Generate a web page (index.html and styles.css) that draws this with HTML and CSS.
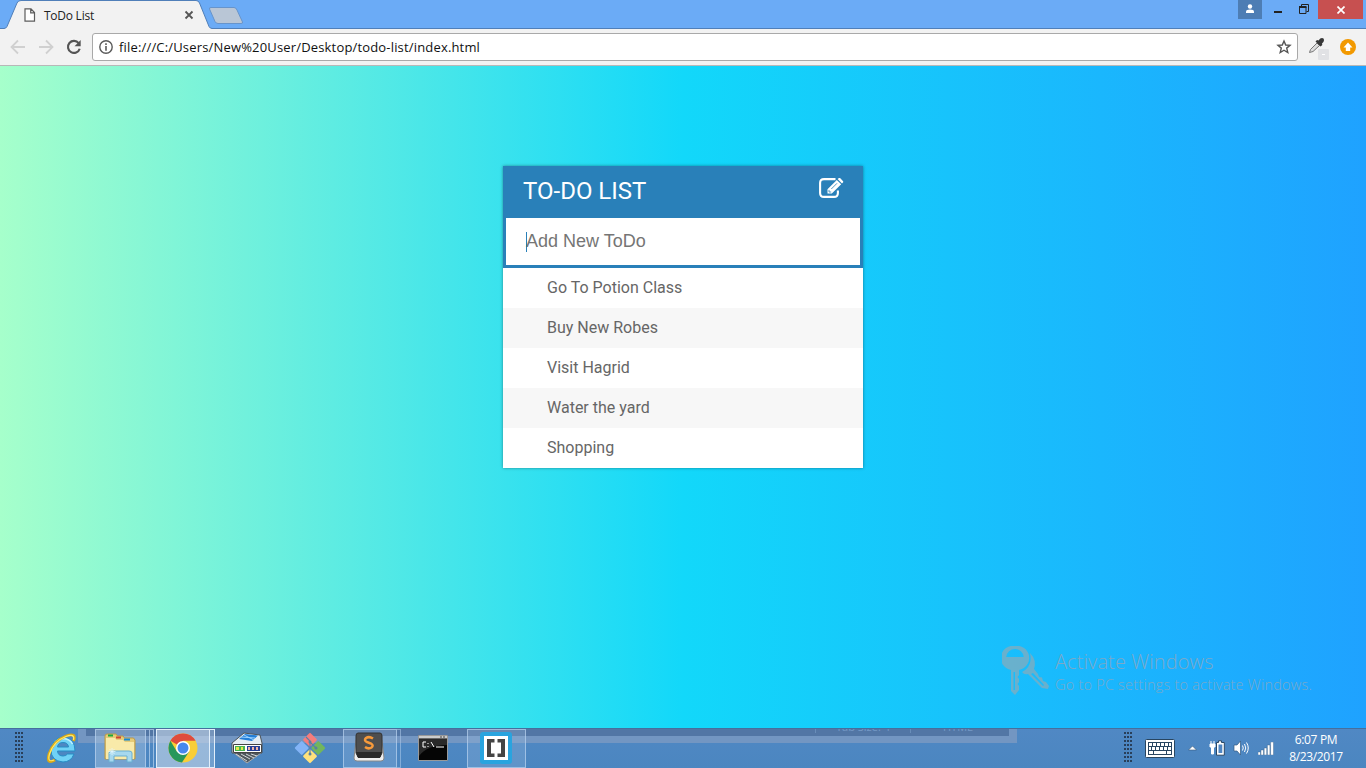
FILE: index.html
```html
<!DOCTYPE html>
<html lang="en">
<head>
<meta charset="utf-8">
<title>ToDo List</title>
<link rel="stylesheet" href="styles.css">
</head>
<body>
<div class="screen">
  <header class="tabstrip">
    <svg class="tab-shapes" width="260" height="29" viewBox="0 0 260 29">
      <path d="M0 28.5H4Q6 28.500 7 26.500L17 3Q18 .5 21 .5H196Q198.500 .5 199.500 3L209 26.500Q210 28.500 212 28.500H260V29H0Z" fill="#f2f2f2"/>
      <path d="M0 28.500H4Q6 28.500 7 26.500L17 3Q18 .5 21 .5H196Q198.500 .5 199.500 3L209 26.500Q210 28.500 212 28.500H260" fill="none" stroke="#507fb9"/>
      <path d="M211 7.500H234Q236 7.500 237 10L242.500 22Q243 23.500 241 23.500H218Q216 23.500 215 21.500L209.500 9Q209 7.500 211 7.500Z" fill="#b9c6d6" stroke="#6794cb"/>
    </svg>
    <div class="tab">
      <svg width="12" height="14" viewBox="0 0 12 14"><path d="M1 .8H7L10.500 4.500V13.200H1ZM6.700 1V4.800H10.500" fill="#fff" stroke="#5c5c5c" stroke-width="1.200"/></svg>
      <span class="tab-title">ToDo List</span>
      <svg width="10" height="10" viewBox="0 0 10 10"><path d="M1.500 1.500L8.500 8.500M8.500 1.500L1.500 8.500" stroke="#555" stroke-width="1.800"/></svg>
    </div>
    <div class="window-controls">
      <span class="user"><svg width="10" height="10" viewBox="0 0 10 10"><circle cx="5" cy="2.500" r="2.200" fill="#fff"/><path d="M1 9V7.500Q1 5.500 5 5.500T9 7.500V9Z" fill="#fff"/></svg></span>
      <svg class="min" width="8" height="3"><path d="M0 0H8V2H0Z" fill="#222"/></svg>
      <svg class="max" width="10" height="10" viewBox="0 0 10 10"><path d="M2.500 2.500V.5H9.500V7.500H7.500" fill="none" stroke="#222"/><path d="M.5 3H7V9.500H.5Z" fill="none" stroke="#222"/><path d="M0 2H7.500V4H0Z" fill="#222"/></svg>
      <span class="close"><svg width="8" height="8" viewBox="0 0 8 8"><path d="M.5 .5L7.500 7.500M7.500 .5L.5 7.500" stroke="#fff" stroke-width="1.700"/></svg></span>
    </div>
  </header>

  <nav class="toolbar">
    <svg class="back" width="16" height="16" viewBox="0 0 16 16"><path d="M15 8H2M8 1.500L1.500 8L8 14.500" fill="none" stroke="#d0d0d0" stroke-width="1.800"/></svg>
    <svg class="forward" width="16" height="16" viewBox="0 0 16 16"><path d="M1 8H14M8 1.500L14.500 8L8 14.500" fill="none" stroke="#d0d0d0" stroke-width="1.800"/></svg>
    <svg class="reload" width="16" height="16" viewBox="0 0 16 16"><path d="M12.700 4.200A6 6 0 1 0 13.700 9.700" fill="none" stroke="#545454" stroke-width="2.100"/><path d="M14.700 1V7.200H8.500Z" fill="#545454"/></svg>
    <div class="address">
      <svg width="14" height="14" viewBox="0 0 14 14"><circle cx="7" cy="7" r="6.200" fill="none" stroke="#5a5a5a" stroke-width="1.400"/><path d="M6.200 3.200H7.800V4.900H6.200ZM6.200 6H7.800V10.800H6.200Z" fill="#5a5a5a"/></svg>
      <span class="url">file:///C:/Users/New%20User/Desktop/todo-list/index.html</span>
      <svg width="16" height="16" viewBox="0 0 16 16"><path d="M8 2L9.700 6L14 6.300L10.700 9.100L11.800 13.500L8 11.200L4.200 13.500L5.300 9.100L2 6.300L6.300 6Z" fill="none" stroke="#555" stroke-width="1.400"/></svg>
    </div>
    <svg class="dropper" width="22" height="24" viewBox="0 0 22 24"><rect x="10" y="13" width="11" height="11" rx="1" fill="#e1e2e5"/><path d="M14 18.500H17" stroke="#fff"/><path d="M1.500 16.500L2.500 13.500L9 7L11.500 9.500L5 15.500Z" fill="#ddd" stroke="#777"/><path d="M7.500 5.500L9 4L10.500 4.500Q13 1 15.500 2.500Q17 5 14 7.500L14.300 9L12.500 10.500Z" fill="#383838"/></svg>
    <svg class="updater" width="16" height="16" viewBox="0 0 16 16"><circle cx="8" cy="8" r="8" fill="#f29900"/><path d="M8 3.500L12.500 8.500H10.200V12H5.800V8.500H3.500Z" fill="#fff"/></svg>
  </nav>

  <main class="page">
    <section class="card">
      <h1 class="card-title">TO-DO LIST
        <svg width="25" height="20" viewBox="0 0 25 20"><path d="M16.500 1.100H5Q1.100 1.100 1.100 5V15Q1.100 18.900 5 18.900H15Q18.900 18.900 18.900 15V12.500" fill="none" stroke="#fff" stroke-width="2.100"/><path d="M8.500 15.500V11.200L17.800 1.900L22.200 6.200L12.800 15.500ZM18.600 1.100L19.600 .3Q20.500 -.4 21.300 .3L23.900 2.900Q24.700 3.800 23.900 4.600L23 5.500Z" fill="#fff"/><path d="M10 11.900V14H12.200M12.300 11L18 5.300" fill="none" stroke="#2980b9" stroke-width=".8"/></svg>
      </h1>
      <div class="entry"><span class="caret"></span>Add New ToDo</div>
      <ul class="todos">
        <li>Go To Potion Class</li>
        <li>Buy New Robes</li>
        <li>Visit Hagrid</li>
        <li>Water the yard</li>
        <li>Shopping</li>
      </ul>
    </section>
    <aside class="watermark">
      <svg width="48" height="50" viewBox="0 0 48 50"><g fill="#93aab5" fill-opacity=".66"><path fill-rule="evenodd" d="M13 0A12 12 0 0 1 17 24V29L15.500 31L17 33V36L15.500 38L17 40V44L13 49L9 45V24A12 12 0 0 1 13 0ZM13 3A9 9 0 0 0 4.200 11H21.800A9 9 0 0 0 13 3ZM11.500 26V44H13V26Z"/><path fill-rule="evenodd" d="M28 7Q35 14 32 23L36 28L37 31L40 31.500L41 35L44 36L47 40L46 43L40 42L26 28Q22 29 20 26Q31 20 28 7ZM29 28L41 40L42 39L31 27Z"/></g></svg>
      <div><p class="wm-title">Activate Windows</p><p class="wm-text">Go to PC settings to activate Windows.</p></div>
    </aside>
  </main>

  <footer class="taskbar">
    <div class="ghost"><div class="ghost-inner"><span class="ghost-tab">Tab Size: 4</span><span class="ghost-lang">HTML</span></div></div>
    <i class="grip grip-left"></i>
    <svg class="ie" width="32" height="32" viewBox="0 0 32 32"><path d="M29 19H11.500Q12 24 17 24Q20 24 21.500 22H28Q25 30 17 30Q5 29 5 18Q6 6 17 5Q29 6 29 19ZM11.500 15H22.500Q22 10.500 17 10.500T11.500 15Z" fill="#70d2f6" stroke="#278cc4"/><path d="M8 14Q10 7 17 6.500Q24 7 26.500 12" fill="none" stroke="#c2f1ff" stroke-width="1.500"/><path d="M27.500 9Q31 0 20 4Q7 9 3 22Q0 33 9 28" fill="none" stroke="#dba916" stroke-width="2.800"/><path d="M27.500 8Q29 1 20 4.500Q8 9 3.500 22Q1 31 8 28" fill="none" stroke="#ffe869" stroke-width="1.200"/></svg>
    <div class="task explorer">
      <svg width="32" height="30" viewBox="0 0 32 30"><path d="M1 26V3Q1 1 3 1H12L13.500 3H19L20.500 5H29.500L31 7V26Z" fill="#e6cb77" stroke="#bb9949"/><path d="M4 1.500H9V3.500H4Z" fill="#18aa3c"/><path d="M12 3.500H17V5.500H12Z" fill="#cf4430"/><path d="M20 5.500H26V7.500H20Z" fill="#168ad6"/><path d="M2 5H11L12.500 7H19L21 9H30V26H2Z" fill="#f9eaa9"/><path d="M5 29V20Q5 18 8 18H25Q28 18 28 20V29H23V23H10V29Z" fill="#a6d8ee" stroke="#69aed1"/><path d="M8 15V22M4.500 18.500H11.500M5.500 16L10.500 21M10.500 16L5.500 21" stroke="#e9fbff" stroke-width=".7"/></svg>
    </div><i class="stack"></i><i class="stack second"></i>
    <div class="task chrome">
      <svg width="30" height="30" viewBox="0 0 30 30"><circle cx="15" cy="15" r="14.500" fill="#f9ce37"/><path d="M15 15L2.400 7.800A14.500 14.500 0 0 1 27.600 7.800H15Z" fill="#df4b3d"/><path d="M2.400 7.800A14.500 14.500 0 0 0 14 29.500L21.200 18.600L15 15L8.800 18.600Z" fill="#27975b"/><circle cx="15" cy="15" r="7" fill="#fff"/><circle cx="15" cy="15" r="5.500" fill="#4788ee"/></svg>
    </div><i class="stack active-stack"></i>
    <svg class="server" width="32" height="32" viewBox="0 0 32 32"><path d="M3 21L16 31L30 21V14H3Z" fill="#50585e" stroke="#aaa"/><path d="M1 11L13 1L29 3L31 11V21H1Z" fill="#e5edf3" stroke="#4c5358"/><path d="M14 2L27 3.500L21 9L8 7Z" fill="#237ed7"/><path d="M10 5L24 6M13 3L23 8" stroke="#9cd3ff"/><path d="M2.500 12.500H30.500V20.500H2.500Z" fill="#fff" stroke="#444"/><path d="M4 14H14V19H4Z" fill="#4ab54f"/><path d="M5 16.500H8M10 16.500H12" stroke="#e7e54f" stroke-width="3"/><path d="M16 14H29V19H16Z" fill="#263f95"/><path d="M18 15V18M22 15V18M26 15V18" stroke="#efb3a9" stroke-width="2"/><path d="M5 22L16 29M10 22L19 27M15 22L23 26M20 22L26 24" stroke="#d5d8da"/></svg>
    <svg class="git" width="32" height="32" viewBox="0 0 32 32"><g transform="rotate(45 16 16)"><rect x="5" y="5" width="10.300" height="10.300" rx="1" fill="#f47d7c"/><rect x="16.700" y="5" width="10.300" height="10.300" rx="1" fill="#72b65c"/><rect x="5" y="16.700" width="10.300" height="10.300" rx="1" fill="#83b4f7"/><rect x="16.700" y="16.700" width="10.300" height="10.300" rx="1" fill="#ffe17c"/></g><path d="M12 5L16 9V23M17 11L22 16" fill="none" stroke="#5580ad" stroke-width="1.100"/><circle cx="16" cy="10" r="1.500" fill="#59819f"/><circle cx="16" cy="22" r="1.500" fill="#59819f"/><circle cx="22" cy="16" r="1.500" fill="#59819f"/></svg>
    <div class="task sublime">
      <svg width="32" height="30" viewBox="0 0 32 30"><path d="M3 8L1 26Q1 29 4 29H28Q31 29 31 26L29 8Z" fill="#eee" stroke="#888"/><path d="M5 1H27Q29 1 29 4V21L27 25H5L3 21V4Q3 1 5 1Z" fill="#4e4e4e" stroke="#333"/><path d="M3 20H29L27 26H5Z" fill="#292929"/><path d="M20 6.500Q16 4 13 6Q10.500 8.500 14 10L18 11.500Q21 13.500 18.500 15.500Q15.500 17.500 12 15" fill="none" stroke="#f79a3b" stroke-width="2.500"/></svg>
    </div><i class="stack dim"></i>
    <svg class="cmd" width="30" height="26" viewBox="0 0 30 26"><path d="M.5 .5H29.500V25.500H.5Z" fill="#050505" stroke="#999"/><path d="M1 1H29V3.500H1Z" fill="#ccc"/><path d="M22 2H24M25 2H27" stroke="#444"/><path d="M1 4H29V10Q9 10 1 21Z" fill="#292929"/><path d="M8 7H5V12H8M10 8V9M10 11V12M13 7L16 12M18 12H26" fill="none" stroke="#fff"/></svg>
    <div class="task brackets">
      <svg width="32" height="32" viewBox="0 0 32 32"><rect width="32" height="32" rx="3" fill="#29a4df"/><path d="M4 4H28V28H4Z" fill="#fff"/><path d="M14.500 7H7V25H14.500V21.500H11V10.500H14.500ZM17.500 7H25V25H17.500V21.500H21V10.500H17.500Z" fill="#454545"/></svg>
    </div>
    <div class="tray">
      <i class="grip"></i>
      <svg class="keyboard" width="30" height="19" viewBox="0 0 30 19"><rect x=".5" y=".5" width="29" height="18" rx="1" fill="#fff" stroke="#284560"/><path d="M3 3H27V16H3Z" fill="#284560"/><path d="M4 4H7V7H4ZM8 4H11V7H8ZM12 4H15V7H12ZM16 4H19V7H16ZM20 4H23V7H20ZM24 4H26V7H24ZM4 8H6V11H4ZM7 8H10V11H7ZM11 8H14V11H11ZM15 8H18V11H15ZM19 8H22V11H19ZM23 8H26V11H23ZM4 12H8V15H4ZM9 12H21V15H9ZM22 12H26V15H22Z" fill="#fff"/></svg>
      <svg class="arrow" width="9" height="6" viewBox="0 0 9 6"><path d="M.5 5L4.500 1L8.500 5Z" fill="#fff" stroke="#375778" stroke-width=".6"/></svg>
      <svg class="battery" width="16" height="16" viewBox="0 0 16 16"><path d="M7.500 2.500H9.500V.8H12.500V2.500H15.300V15.200H7.500Z" fill="#fff" stroke="#294765"/><path d="M9.500 4.500H13.300V13H9.500Z" fill="#4f86c3"/><path d="M1 4H6V7H4.500V14H2.500V7H1ZM2 1V4M5 1V4" fill="#fff" stroke="#fff"/></svg>
      <svg class="speaker" width="17" height="16" viewBox="0 0 17 16"><path d="M1 5H4L7.500 1V15L4 11H1Z" fill="#fff" stroke="#345a81" stroke-width=".7"/><path d="M9.500 5.500Q11 8 9.500 10.500M11.500 4Q14 8 11.500 12M13.500 2.500Q17 8 13.500 13.500" fill="none" stroke="#fff"/></svg>
      <svg class="signal" width="16" height="13" viewBox="0 0 16 13"><path d="M0 10H2.500V13H0ZM3 8H5.500V13H3ZM6.200 6H8.700V13H6.200ZM9.400 3H11.900V13H9.400ZM12.600 0H15.500V13H12.600Z" fill="#fff" stroke="#345d87" stroke-width=".4"/></svg>
      <div class="clock"><span class="time">6:07 PM</span><span class="date">8/23/2017</span></div>
    </div>
  </footer>
</div>
</body>
</html>
```
FILE: styles.css
```css
* { box-sizing: border-box; }
body { margin: 0; overflow: hidden; font-family: "Open Sans", sans-serif; }
svg { display: block; flex: none; }
.screen { width: 1366px; height: 768px; display: flex; flex-direction: column; }
.tabstrip { position: relative; height: 29px; flex: none; background: #6babf6; border-bottom: 1px solid #507fb9; display: flex; justify-content: space-between; }
.tab-shapes { position: absolute; left: 0; top: 0; }
.tab { position: relative; display: flex; align-items: center; width: 194px; height: 30px; padding-left: 24px; }
.tab-title { width: 140px; margin-left: 8px; font-size: 12px; letter-spacing: -.25px; color: #222; white-space: nowrap; }
.window-controls { display: flex; height: 19px; align-items: flex-start; }
.user { width: 24px; height: 19px; background: #4d7db4; padding: 4px 7px; }
.min { margin: 11px 0 0 12px; }
.max { margin: 4px 0 0 17px; }
.close { width: 45px; height: 19px; margin: 0 3px 0 9px; background: #c75050; display: flex; align-items: center; justify-content: center; }
.toolbar { height: 37px; flex: none; background: #f2f2f2; border-bottom: 1px solid #b8b8b8; display: flex; align-items: center; padding: 0 10px; }
.forward { margin-left: 12px; }
.reload { margin-left: 12px; }
.address { width: 1206px; height: 28px; margin-left: 10px; padding: 0 5px 0 6px; border: 1px solid #a9a9a9; border-radius: 3px; background: #fff; display: flex; align-items: center; }
.url { flex: 1; margin-left: 6px; font-size: 13px; letter-spacing: .17px; color: #111; white-space: nowrap; }
.dropper { margin: 2px 0 0 10px; }
.updater { margin-left: 10px; }
.page { height: 662px; flex: none; background: linear-gradient(to right, #a6ffcb, #12d8fa, #1fa2ff); display: flex; flex-direction: column; align-items: center; justify-content: space-between; padding-top: 100px; }
.card { width: 360px; background: #f7f7f7; box-shadow: 0 0 3px rgba(0,0,0,.4); font-family: Roboto, sans-serif; }
.card-title { height: 52px; margin: 0; padding: 0 19px 0 20px; background: #2980b9; color: #fff; font-size: 24px; font-weight: 400; line-height: 50px; display: flex; justify-content: space-between; }
.card-title svg { margin-top: 12px; }
.entry { height: 50px; border: 3px solid #2980b9; border-top: 0; background: #fff; padding: 0 20px; display: flex; align-items: center; color: #757575; font: 18px "Liberation Sans", sans-serif; }
.caret { width: 1px; height: 20px; margin-right: -1px; background: #2980b9; }
.todos { list-style: none; margin: 0; padding: 0; }
.todos li { height: 40px; line-height: 40px; padding-left: 44px; background: #fff; color: #666; font-size: 16px; }
.todos li:nth-child(even) { background: #f7f7f7; }
.watermark { align-self: flex-end; width: 364px; margin-bottom: 32px; display: flex; gap: 5px; color: #7ba9c9; font-weight: 300; white-space: nowrap; }
.watermark p { margin: 0; }
.wm-title { font-size: 20px; line-height: 32px; letter-spacing: .1px; }
.wm-text { font-size: 14.5px; line-height: 14px; letter-spacing: .22px; }
.taskbar { position: relative; height: 40px; flex: none; overflow: hidden; background: linear-gradient(#5088c4, #4b86c0); border-top: 1px solid #466f9d; display: flex; align-items: center; padding-bottom: 1px; }
.ghost { position: absolute; left: 78px; top: -1px; width: 939px; height: 15px; background: #7396c2; }
.ghost-inner { position: relative; width: 923px; height: 8px; margin-left: 8px; background: #5276a5; overflow: hidden; color: #7599c5; font-size: 11px; line-height: 12px; }
.ghost-tab { position: absolute; left: 729px; top: -7px; padding-left: 20px; width: 96px; border-left: 1px solid #688db9; border-right: 1px solid #688db9; }
.ghost-lang { position: absolute; left: 857px; top: -7px; }
.taskbar > :not(.ghost) { position: relative; flex: none; }
.grip { width: 8px; height: 32px; background: radial-gradient(circle at 1px 1px, #293f59 1px, transparent 1.2px) 0 0 / 3px 4px; }
.grip-left { margin-left: 15px; }
.ie { margin-left: 23px; }
.task { height: 39px; border: 1px solid rgba(190,215,242,.65); background: rgba(175,202,232,.22); display: flex; align-items: center; justify-content: center; }
.explorer { width: 51px; margin-left: 17px; background: rgba(185,207,231,.38); }
.explorer svg { margin-left: -2px; }
.stack { width: 4px; height: 39px; border: 1px solid rgba(195,218,242,.65); border-left: 0; }
.chrome { width: 54px; margin-left: 2px; border-color: #e1eefa; background: rgba(201,216,233,.6); }
.active-stack { width: 5px; border-color: #e1eefa; background: rgba(200,220,240,.3); }
.server { margin-left: 16px; }
.git { margin-left: 31px; }
.sublime { width: 54px; margin-left: 17px; }
.sublime svg { margin: -3px 0 0 -3px; }
.dim { border-color: rgba(176,204,235,.55); }
.cmd { margin-left: 17px; }
.brackets { width: 59px; margin-left: 19px; }
.brackets svg { margin-left: -2px; }
.taskbar > .tray { display: flex; align-items: center; height: 39px; margin-left: auto; width: 242px; }
.keyboard { margin-left: 13px; }
.arrow { margin-left: 13px; }
.battery { margin-left: 12px; }
.speaker { margin-left: 8px; }
.signal { margin-left: 8px; }
.clock { width: 82px; margin-left: 1px; display: flex; flex-direction: column; align-items: center; color: #fff; font-size: 12px; line-height: 17px; letter-spacing: -.35px; white-space: nowrap; }
```
